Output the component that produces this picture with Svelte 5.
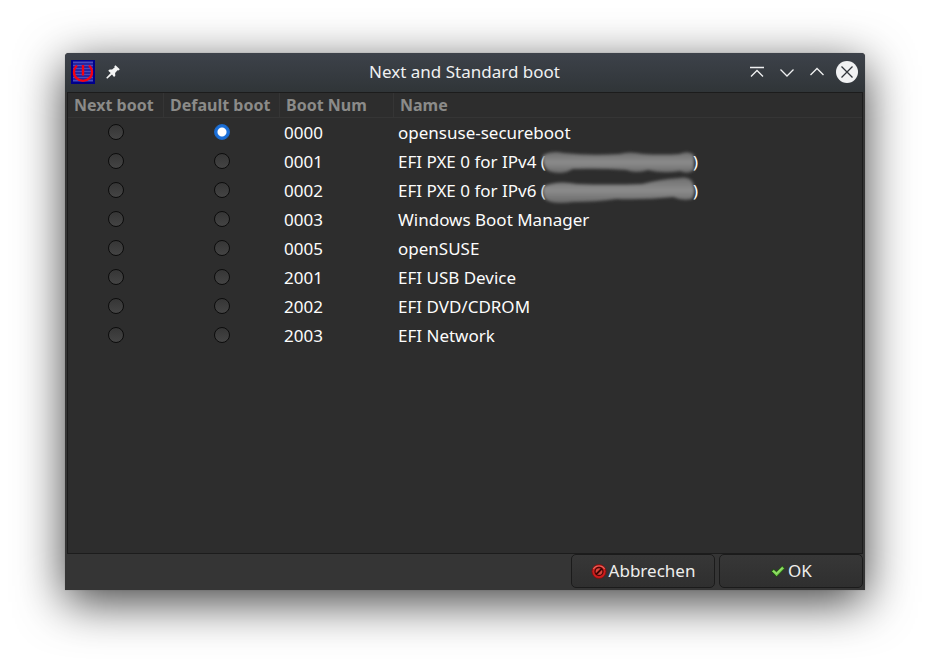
<script>
  const entries = [
    { num: '0000', name: 'opensuse-secureboot' },
    { num: '0001', name: 'EFI PXE 0 for IPv4', smudge: 'a' },
    { num: '0002', name: 'EFI PXE 0 for IPv6', smudge: 'b' },
    { num: '0003', name: 'Windows Boot Manager' },
    { num: '0005', name: 'openSUSE' },
    { num: '2001', name: 'EFI USB Device' },
    { num: '2002', name: 'EFI DVD/CDROM' },
    { num: '2003', name: 'EFI Network' }
  ];
  let nextBoot = $state('');
  let defaultBoot = $state('0000');
</script>

<main class="desktop">
  <section class="window" aria-labelledby="title">
    <header class="titlebar">
      <div class="side">
        <svg class="app" viewBox="0 0 24 24" aria-hidden="true">
          <rect width="24" height="24" fill="#00008c" />
          <path d="M2 2.5h20M2 5.5h20M2 8.5h20M2 11.5h20M2 14.5h20M2 17.5h20M2 20.5h20" stroke="#4c4cbc" stroke-width="2" />
          <path d="M6 5.500A9 8.800 0 1 0 18 5.500" fill="none" stroke="#f80010" stroke-width="2.300" />
          <path d="M12 5v10.500" stroke="#f80010" stroke-width="2.400" />
        </svg>
        <button class="icon" aria-label="Keep window on all desktops">
          <svg viewBox="0 0 16 16" width="16" height="16"><path d="M10.500 1.200l4.300 4.100-1.300 1.200-1-.2-2.400 2.700.2 2.700-1.300 1.200-2-2.300L2.200 14.800l-1-1L5.700 9 3.200 6.700l1.400-1.300 2.500.2 2.700-2.400-.5-.9z" fill="#f4f5f5" /></svg>
        </button>
      </div>
      <h1 id="title">Next and Standard boot</h1>
      <div class="side right">
        <button class="icon" aria-label="Shade">
          <svg viewBox="0 0 16 16" width="16" height="16"><path d="M1 3.500h14M2 12.500l6-6 6 6" /></svg>
        </button>
        <button class="icon" aria-label="Minimize">
          <svg viewBox="0 0 16 16" width="16" height="16"><path d="M1.500 5.500L8 12l6.500-6.500" /></svg>
        </button>
        <button class="icon" aria-label="Maximize">
          <svg viewBox="0 0 16 16" width="16" height="16"><path d="M1.500 11L8 4.500l6.500 6.500" /></svg>
        </button>
        <button class="icon close" aria-label="Close">
          <svg viewBox="0 0 22 22" width="22" height="22"><path d="M5.500 5.500l11 11M16.500 5.500l-11 11" /></svg>
        </button>
      </div>
    </header>

    <div class="list">
      <table>
        <colgroup><col class="c1" /><col class="c2" /><col class="c3" /><col /></colgroup>
        <thead>
          <tr><th>Next boot</th><th>Default boot</th><th>Boot Num</th><th>Name</th></tr>
        </thead>
        <tbody>
          {#each entries as entry (entry.num)}
            <tr>
              <td class="pick"><input type="radio" name="next" value={entry.num} bind:group={nextBoot} aria-label="Next boot {entry.num}" /></td>
              <td class="pick"><input type="radio" name="default" value={entry.num} bind:group={defaultBoot} aria-label="Default boot {entry.num}" /></td>
              <td>{entry.num}</td>
              <td>
                {entry.name}
                {#if entry.smudge}
                  <span class="mac">(<svg class="smudge" viewBox="0 0 150 24" preserveAspectRatio="none" aria-hidden="true">
                      <defs>
                        <filter id="soft-{entry.smudge}" x="-10%" y="-30%" width="120%" height="160%"><feGaussianBlur stdDeviation="1.800" /></filter>
                        <linearGradient id="tone-{entry.smudge}" x2="0" y2="1"><stop offset="0" stop-color="#6c6c6c" /><stop offset=".5" stop-color="#8c8c8c" /><stop offset="1" stop-color="#686868" /></linearGradient>
                      </defs>
                      {#if entry.smudge === 'a'}
                        <path filter="url(#soft-a)" fill="url(#tone-a)" d="M-3 5Q6 0 18 3Q45 6 75 4Q85 1 99 4Q120 5 136 4Q146 0 151 5V20Q145 25 137 21Q120 24 104 20Q92 24 82 20Q55 18 27 19Q18 25 6 22Q-4 20-3 5Z" />
                      {:else}
                        <path filter="url(#soft-b)" fill="url(#tone-b)" d="M-2 7Q12 1 32 5Q65 6 98 5Q118 0 136-1Q144-3 149 2Q154 12 149 20Q138 22 130 18Q100 21 72 20Q52 23 28 23Q6 26-1 20Q-5 12-2 7Z" />
                      {/if}
                    </svg>)</span>
                {/if}
              </td>
            </tr>
          {/each}
        </tbody>
      </table>
    </div>

    <footer>
      <button class="action">
        <svg viewBox="0 0 16 16" width="16" height="16" aria-hidden="true">
          <circle cx="8" cy="8.500" r="7" fill="#cf1c1c" stroke="#7a1010" stroke-width=".8" />
          <path d="M2.500 6a6 5 0 0 1 11 0" fill="none" stroke="#e8675c" stroke-width="1.200" />
          <circle cx="8" cy="8.500" r="4" fill="#d9463c" stroke="#4a0808" stroke-width="1.300" />
          <path d="M5 11.500l6-6" stroke="#3c0505" stroke-width="1.800" />
        </svg>Abbrechen
      </button>
      <button class="action">
        <svg viewBox="0 0 16 16" width="16" height="16" aria-hidden="true">
          <path d="M1.300 8.300l2.500-2.100 2.700 2.400 5.800-5.500 2.500 2.300-8.200 8.400z" fill="#6cc644" stroke="#163d0b" stroke-width=".8" stroke-linejoin="round" />
          <path d="M3.300 7.900l3.200 2.800 6-5.900" fill="none" stroke="#9be070" stroke-width="1.200" />
        </svg>OK
      </button>
    </footer>
  </section>
</main>

<style>
  :global(body) {
    margin: 0;
    background: #fff;
  }
  .desktop {
    box-sizing: border-box;
    min-height: 100vh;
    padding: 53px 65px 77px;
    display: flex;
    overflow: hidden;
    font: 17px/24px "Noto Sans", sans-serif;
    color: #fcfcfc;
  }
  .window {
    flex: 1;
    display: flex;
    flex-direction: column;
    min-width: 0;
    background: #353535;
    border-radius: 4px 4px 0 0;
    box-shadow: 0 12px 48px rgba(0, 0, 0, 0.75), 0 0 1px rgba(0, 0, 0, 0.4);
  }
  .titlebar {
    display: flex;
    align-items: center;
    height: 39px;
    padding: 0 7px 2px 6px;
    box-sizing: border-box;
    border-radius: 4px 4px 0 0;
    background: linear-gradient(#3d424a, #303538);
  }
  .side {
    flex: 1;
    display: flex;
    align-items: center;
    gap: 10px;
  }
  .right {
    justify-content: flex-end;
    gap: 14px;
  }
  h1 {
    margin: 0;
    font-size: 17px;
    font-weight: 400;
    color: #eff0f1;
  }
  .app {
    width: 24px;
    height: 24px;
  }
  .icon {
    display: flex;
    padding: 0;
    border: 0;
    background: none;
    fill: none;
    stroke: #eff0f1;
    stroke-width: 1.3;
  }
  .side:not(.right) .icon {
    stroke: none;
  }
  .right .close {
    border-radius: 50%;
    background: #f1f2f3;
    stroke: #31363b;
    margin-left: -3px;
  }
  .list {
    flex: 1;
    margin: 0 2px;
    border: 1px solid #1c1c1c;
    background: #2d2d2d;
  }
  table {
    width: 100%;
    table-layout: fixed;
    border-collapse: separate;
    border-spacing: 0;
  }
  .c1 {
    width: 96px;
  }
  .c2 {
    width: 116px;
  }
  .c3 {
    width: 114px;
  }
  th {
    height: 24px;
    padding: 0 0 0 6px;
    border-right: 1px solid #353535;
    border-bottom: 1px solid #353535;
    text-align: left;
    white-space: nowrap;
    color: #8b8b89;
    font-size: 16px;
    font-weight: 700;
  }
  th:last-child {
    border-right: 0;
  }
  td {
    height: 29px;
    padding: 0 0 0 4px;
    white-space: nowrap;
  }
  .pick {
    padding: 0 0 2px;
    height: 27px;
  }
  input {
    appearance: none;
    display: block;
    box-sizing: border-box;
    width: 16px;
    height: 16px;
    margin: 0 auto;
    border: 1px solid #0c0c0c;
    border-radius: 50%;
    background: linear-gradient(#363636, #444);
  }
  input:checked {
    border-color: #1b6acb;
    background: radial-gradient(circle, #fff 4px, #1b6fd8 5px);
  }
  .mac {
    display: inline-flex;
    align-items: center;
    height: 24px;
  }
  .smudge {
    width: 147px;
    height: 24px;
    overflow: visible;
  }
  footer {
    display: flex;
    justify-content: flex-end;
    gap: 4px;
    padding: 0 2px 2px;
  }
  .action {
    display: flex;
    align-items: center;
    justify-content: center;
    gap: 2px;
    width: 144px;
    height: 34px;
    padding: 0;
    border: 1px solid #1b1b1b;
    border-radius: 5px;
    background: linear-gradient(#373737, #2f2f2f);
    color: #eeeeec;
    font: inherit;
  }
</style>
